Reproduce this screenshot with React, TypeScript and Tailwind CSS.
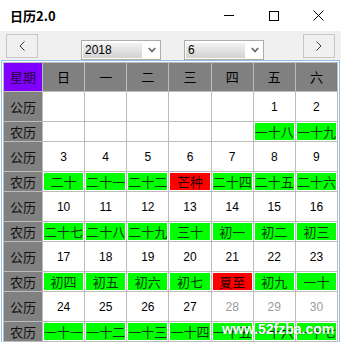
import React from "react";

const cjk = "font-['Microsoft_YaHei','Noto_Sans_CJK_SC',sans-serif]";
const num = "font-['Liberation_Sans',Arial,sans-serif]";

type Lunar = { text: string; red?: boolean } | null;

const heads = ["日", "一", "二", "三", "四", "五", "六"];

const weeks: { days: (number | null)[]; lunar: Lunar[] }[] = [
  {
    days: [null, null, null, null, null, 1, 2],
    lunar: [null, null, null, null, null, { text: "一十八" }, { text: "一十九" }],
  },
  {
    days: [3, 4, 5, 6, 7, 8, 9],
    lunar: [
      { text: "二十" },
      { text: "二十一" },
      { text: "二十二" },
      { text: "芒种", red: true },
      { text: "二十四" },
      { text: "二十五" },
      { text: "二十六" },
    ],
  },
  {
    days: [10, 11, 12, 13, 14, 15, 16],
    lunar: [
      { text: "二十七" },
      { text: "二十八" },
      { text: "二十九" },
      { text: "三十" },
      { text: "初一" },
      { text: "初二" },
      { text: "初三" },
    ],
  },
  {
    days: [17, 18, 19, 20, 21, 22, 23],
    lunar: [
      { text: "初四" },
      { text: "初五" },
      { text: "初六" },
      { text: "初七" },
      { text: "夏至", red: true },
      { text: "初九" },
      { text: "一十" },
    ],
  },
  {
    days: [24, 25, 26, 27, 28, 29, 30],
    lunar: [
      { text: "一十一" },
      { text: "一十二" },
      { text: "一十三" },
      { text: "一十四" },
      { text: "一十五" },
      { text: "一十六" },
      { text: "一十七" },
    ],
  },
];

function NavButton({ dir }: { dir: "left" | "right" }) {
  return (
    <div className="w-[32px] h-[24px] border border-[#c6c6c6] bg-[#f0f0f0] flex items-center justify-center">
      <svg width="6" height="10" viewBox="0 0 6 10">
        <polyline
          points={dir === "left" ? "5.5,0.5 1,5 5.5,9.5" : "0.5,0.5 5,5 0.5,9.5"}
          fill="none"
          stroke="#3a3a3a"
          strokeWidth="1"
        />
      </svg>
    </div>
  );
}

function Select({ value }: { value: string }) {
  return (
    <div className="w-[80px] h-[20px] mt-[6px] border border-[#acacac] bg-white flex items-center pl-px pr-[4px]">
      <div
        className={`w-[59px] h-[15px] bg-gradient-to-b from-[#f2f2f2] to-[#d2d2d2] text-[12px] leading-[15px] text-black pl-[2px] ${num}`}
      >
        {value}
      </div>
      <div className="flex-1 flex justify-end">
        <svg width="8" height="6" viewBox="0 0 8 6">
          <polyline points="0.8,1 4,4.5 7.2,1" fill="none" stroke="#6b6b6b" strokeWidth="1.8" />
        </svg>
      </div>
    </div>
  );
}

export default function App() {
  return (
    <div className="w-[341px] h-[342px] overflow-hidden bg-white relative">
      {/* title bar */}
      <div className="h-[31px] flex items-center">
        <div className={`pl-[10px] text-[13px] font-bold text-black ${cjk}`}>日历2.0</div>
        <div className="ml-auto flex h-full">
          <div className="w-[45px] flex items-center justify-center">
            <div className="w-[10px] h-px bg-black" />
          </div>
          <div className="w-[45px] flex items-center justify-center">
            <div className="w-[10px] h-[10px] border border-black" />
          </div>
          <div className="w-[45px] flex items-center justify-center">
            <svg width="11" height="11" viewBox="0 0 11 11">
              <path d="M0.5 0.5 L10.5 10.5 M10.5 0.5 L0.5 10.5" stroke="#000" strokeWidth="1" />
            </svg>
          </div>
        </div>
      </div>

      {/* toolbar */}
      <div className="h-[29px] bg-[#f0f0f0] flex items-start pt-[3px] pl-[6px]">
        <NavButton dir="left" />
        <div className="ml-[43px]">
          <Select value="2018" />
        </div>
        <div className="ml-[23px]">
          <Select value="6" />
        </div>
        <div className="ml-[39px]">
          <NavButton dir="right" />
        </div>
      </div>

      {/* calendar grid */}
      <div className="ml-px w-[339px] border-x border-t border-[#8fc1ec] pt-px pl-px">
        <div
          className={`w-[335px] grid grid-cols-[38px_repeat(7,1fr)] grid-rows-[28px_repeat(5,29px_19px)] gap-px p-px bg-[#bcbcbc] text-[13px] ${cjk}`}
        >
          <div className="bg-[#8000ff] flex items-center justify-center text-[#2a0040]">星期</div>
          {heads.map((h) => (
            <div key={h} className="bg-[#808080] flex items-center justify-center text-black">
              {h}
            </div>
          ))}
          {weeks.map((w, i) => (
            <React.Fragment key={i}>
              <div className="bg-[#808080] flex items-center justify-center text-[#111]">公历</div>
              {w.days.map((d, j) => (
                <div
                  key={`d${j}`}
                  className={`bg-white flex items-center justify-center text-[12px] ${num} ${
                    d !== null && d >= 28 ? "text-[#9a9a9a]" : "text-black"
                  }`}
                >
                  {d ?? ""}
                </div>
              ))}
              <div className="bg-[#808080] flex items-center justify-center text-[#111] leading-none">农历</div>
              {w.lunar.map((l, j) => (
                <div key={`l${j}`} className="bg-white p-px">
                  {l && (
                    <div
                      className={`h-full flex items-center justify-center leading-none ${
                        l.red ? "bg-[#ff0000] text-[#2a0000]" : "bg-[#00ff00] text-[#0b3a0b]"
                      }`}
                    >
                      {l.text}
                    </div>
                  )}
                </div>
              ))}
            </React.Fragment>
          ))}
        </div>
      </div>

      {/* watermark */}
      <div
        className={`absolute left-[222px] top-[319px] text-[14px] font-bold text-white ${num} [text-shadow:0_0_2px_rgba(0,0,0,0.35)]`}
      >
        www.52fzba.com
      </div>
    </div>
  );
}
